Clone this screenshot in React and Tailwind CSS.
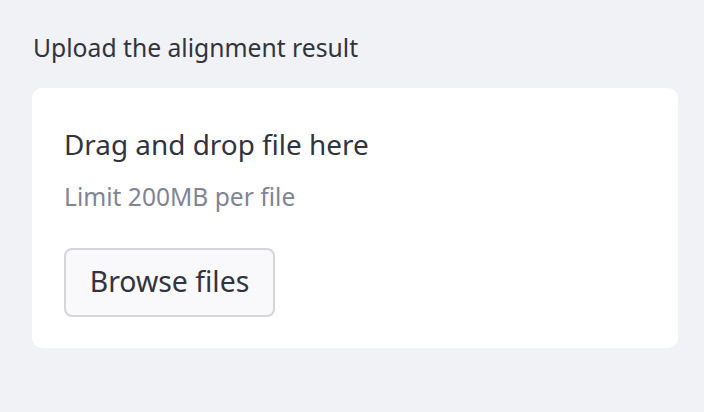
export default function App() {
  return (
    <div className="w-[704px] h-[412px] bg-[#f0f2f6] px-8 pt-[30px]" style={{ fontFamily: '"Noto Sans", sans-serif' }}>
      <div className="text-[24.7px] leading-[36px] text-[#31333f] pl-px">Upload the alignment result</div>
      <div className="mt-[22px] w-[646px] h-[260px] bg-white rounded-[10px] px-8 pt-[38px]">
        <div className="text-[27.9px] leading-[36px] text-[#31333f]">Drag and drop file here</div>
        <div className="mt-[19px] text-[24.6px] leading-[32px] text-[#808495]">Limit 200MB per file</div>
        <button className="mt-[35px] h-[69px] w-[211px] pb-[3px] flex items-center justify-center rounded-[8px] border-2 border-[#d6d6d9] bg-[#f9f9fb] text-[28.4px] leading-[36px] text-[#31333f]">Browse files</button>
      </div>
    </div>
  );
}
